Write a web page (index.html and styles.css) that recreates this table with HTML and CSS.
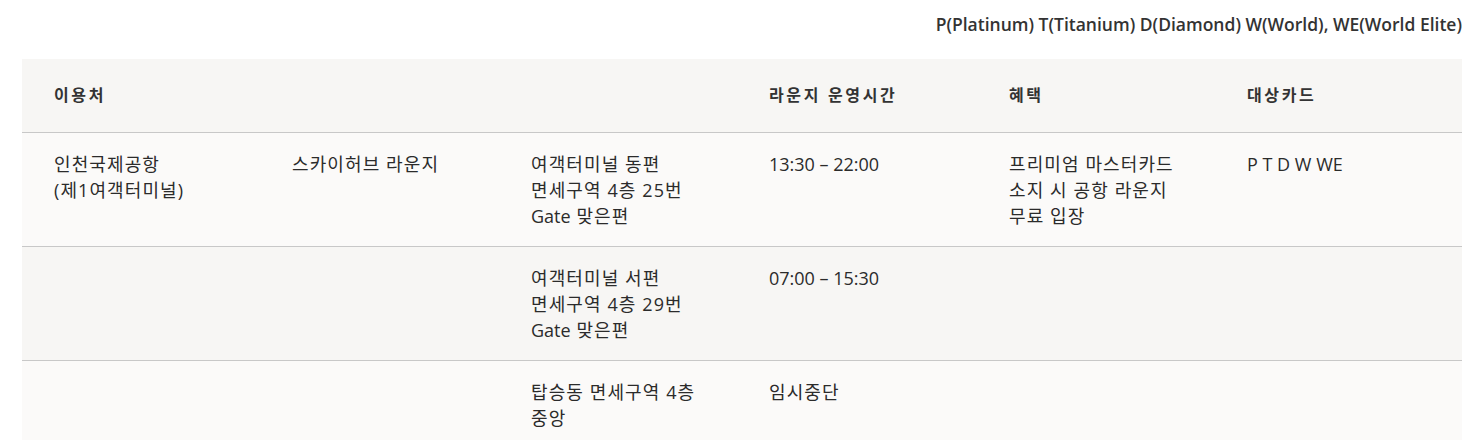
FILE: index.html
```html
<!DOCTYPE html>
<html lang="ko">
<head>
<meta charset="utf-8">
<link rel="stylesheet" href="styles.css">
</head>
<body>
<div class="wrap">
  <p class="legend">P(Platinum) T(Titanium) D(Diamond) W(World), WE(World Elite)</p>
  <table class="lounge">
    <colgroup>
      <col class="c1"><col class="c2"><col class="c3"><col class="c4"><col class="c5"><col class="c6">
    </colgroup>
    <thead>
      <tr>
        <th>이용처</th>
        <th></th>
        <th></th>
        <th>라운지 운영시간</th>
        <th>혜택</th>
        <th>대상카드</th>
      </tr>
    </thead>
    <tbody>
      <tr class="odd">
        <td>인천국제공항<br>(제1여객터미널)</td>
        <td>스카이허브 라운지</td>
        <td>여객터미널 동편<br>면세구역 4층 25번<br><span class="lat">Gate</span> 맞은편</td>
        <td><span class="lat">13:30 – 22:00</span></td>
        <td>프리미엄 마스터카드<br>소지 시 공항 라운지<br>무료 입장</td>
        <td><span class="lat">P T D W WE</span></td>
      </tr>
      <tr class="even">
        <td></td>
        <td></td>
        <td>여객터미널 서편<br>면세구역 4층 29번<br><span class="lat">Gate</span> 맞은편</td>
        <td><span class="lat">07:00 – 15:30</span></td>
        <td></td>
        <td></td>
      </tr>
      <tr class="odd">
        <td></td>
        <td></td>
        <td>탑승동 면세구역 4층<br>중앙</td>
        <td>임시중단</td>
        <td></td>
        <td></td>
      </tr>
    </tbody>
  </table>
</div>
</body>
</html>
```
FILE: styles.css
```css
html, body {
  margin: 0;
  padding: 0;
  background: #ffffff;
}
body {
  font-family: "Open Sans", "Noto Sans CJK KR", sans-serif;
  color: #333333;
}
.wrap {
  padding: 0 19px 0 22px;
}
.legend {
  margin: 12px 0 23px;
  font-size: 17.5px;
  line-height: 24px;
  font-weight: 600;
  text-align: right;
  color: #333333;
}
.lounge {
  width: 1440px;
  border-collapse: collapse;
  table-layout: fixed;
}
.c1 { width: 238px; }
.c2 { width: 239px; }
.c3 { width: 238px; }
.c4 { width: 240px; }
.c5 { width: 238px; }
.lounge th {
  background: #f7f6f4;
  text-align: left;
  font-family: "Noto Sans CJK KR", sans-serif;
  font-size: 16px;
  font-weight: 700;
  letter-spacing: 2.6px;
  line-height: 24px;
  padding: 23px 10px 26px 32px;
  border-bottom: 1px solid #c8c8c8;
  color: #333333;
}
.lounge td {
  vertical-align: top;
  font-size: 18px;
  line-height: 26px;
  letter-spacing: 1.1px;
  padding: 18px 10px 17px 32px;
  border-bottom: 1px solid #c8c8c8;
  color: #2b2b2b;
}
.lounge td .lat {
  letter-spacing: 0;
}
.lounge tr.odd td { background: #fbfaf9; }
.lounge tr.even td { background: #f7f6f4; }
```
